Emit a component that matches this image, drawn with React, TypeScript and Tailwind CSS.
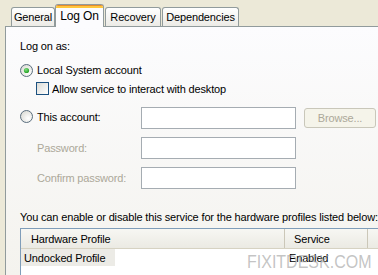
import React from "react";

function Radio({ checked }: { checked?: boolean }) {
  return (
    <svg width="13" height="13" viewBox="0 0 13 13" className="shrink-0">
      <defs>
        <radialGradient id={checked ? "rg1" : "rg2"} cx="0.65" cy="0.65" r="0.7">
          <stop offset="0" stopColor="#ffffff" />
          <stop offset="1" stopColor="#dcdcd6" />
        </radialGradient>
        <radialGradient id="dot" cx="0.4" cy="0.35" r="0.7">
          <stop offset="0" stopColor="#7ee07e" />
          <stop offset="1" stopColor="#1c9a1c" />
        </radialGradient>
      </defs>
      <circle cx="6.5" cy="6.5" r="6" fill={`url(#${checked ? "rg1" : "rg2"})`} stroke="#5a6e7e" strokeWidth="1" />
      {checked && <circle cx="6.5" cy="6.5" r="2.6" fill="url(#dot)" />}
    </svg>
  );
}

function Tab({ label, w, selected }: { label: string; w: string; selected?: boolean }) {
  if (selected) {
    return (
      <div
        className={`relative z-10 -mb-px flex h-[23px] ${w} flex-col overflow-hidden rounded-t-[3px] border border-b-0 border-[#919B9C] bg-[#FCFCFE]`}
      >
        <div className="h-[1px] bg-[#E68B2C]" />
        <div className="h-[2px] bg-[#FFC73C]" />
        <div className="flex flex-1 items-start justify-center pt-[1px] text-[12px] leading-[14px] text-black">{label}</div>
      </div>
    );
  }
  return (
    <div
      className={`flex h-[19px] ${w} items-center justify-center rounded-t-[3px] border border-b-0 border-[#919B9C] bg-gradient-to-b from-[#FFFFFF] to-[#ECEBE6] text-[11px] leading-[13px] text-black`}
    >
      {label}
    </div>
  );
}

export default function App() {
  return (
    <div
      className="relative flex h-[275px] w-[378px] flex-col overflow-hidden bg-[#ECE9D8] text-[11px] leading-[14px] tracking-[-0.15px] text-black"
      style={{ fontFamily: '"Liberation Sans", Arial, sans-serif' }}
    >
      {/* tabs */}
      <div className="flex h-[26px] items-end pl-[11px]">
        <Tab label="General" w="w-[44px]" />
        <Tab label="Log On" w="w-[49px]" selected />
        <div className="w-[1px]" />
        <Tab label="Recovery" w="w-[56px]" />
        <div className="w-[1px]" />
        <Tab label="Dependencies" w="w-[77px]" />
      </div>

      {/* panel */}
      <div className="ml-[5px] flex flex-1 flex-col border-l border-t border-[#919B9C] bg-gradient-to-b from-[#FCFCFE] to-[#F4F3EE] pl-[14px]">
        <div className="mt-[12px] flex h-[14px] items-center">Log on as:</div>

        <div className="mt-[10px] flex h-[14px] items-center gap-[4px]">
          <Radio checked />
          <span>Local System account</span>
        </div>

        <div className="mt-[5px] flex h-[13px] items-center gap-[3px] pl-[16px]">
          <div className="h-[13px] w-[13px] shrink-0 border border-[#1C5180] bg-gradient-to-br from-[#DCDCD7] to-[#FFFFFF]" />
          <span>Allow service to interact with desktop</span>
        </div>

        <div className="mt-[12px] flex h-[22px] items-center">
          <div className="flex w-[121px] items-center gap-[4px] pb-[3px]">
            <Radio />
            <span>This account:</span>
          </div>
          <div className="h-[22px] w-[155px] border border-[#A5ACB2] bg-[#FFFFFF]" />
          <div className="ml-[8px] flex h-[20px] w-[72px] items-center justify-center rounded-[3px] border border-[#C9C7BA] bg-[#F5F4EA] text-[#ACA899]">
            Browse...
          </div>
        </div>

        <div className="mt-[8px] flex h-[22px] items-center">
          <div className="w-[121px] pl-[17px] text-[#ACA899]">Password:</div>
          <div className="h-[22px] w-[155px] border border-[#A5ACB2] bg-[#FFFFFF]" />
        </div>

        <div className="mt-[8px] flex h-[22px] items-center">
          <div className="w-[121px] pl-[17px] text-[#ACA899]">Confirm password:</div>
          <div className="h-[22px] w-[155px] border border-[#A5ACB2] bg-[#FFFFFF]" />
        </div>

        <div className="mt-[21px] flex h-[14px] items-center whitespace-nowrap">
          You can enable or disable this service for the hardware profiles listed below:
        </div>

        <div className="mt-[4px] flex flex-1 flex-col border-l border-t border-[#7F9DB9] bg-white">
          <div className="flex h-[20px] items-center border-b border-[#D6D2C2] bg-gradient-to-b from-[#F7F7F3] to-[#EBEAE3]">
            <div className="flex h-full w-[264px] items-center border-r border-[#CBC7B8] pl-[10px]">Hardware Profile</div>
            <div className="flex h-full w-[83px] items-center border-r border-[#CBC7B8] pl-[9px]">Service</div>
          </div>
          <div className="flex h-[17px] items-center">
            <div className="flex h-full w-[94px] items-center bg-[#ECEBE6] pl-[3px]">Undocked Profile</div>
            <div className="ml-[174px]">Enabled</div>
          </div>
        </div>
      </div>

      {/* watermark */}
      <div
        className="pointer-events-none absolute left-[247px] top-[251px] origin-top scale-y-[1.2] text-[16px] leading-[18px] tracking-[0px] text-[#9C9C9C]/60"
        style={{ fontFamily: '"Liberation Sans", Arial, sans-serif' }}
      >
        FIXITDESK.COM
      </div>
    </div>
  );
}
